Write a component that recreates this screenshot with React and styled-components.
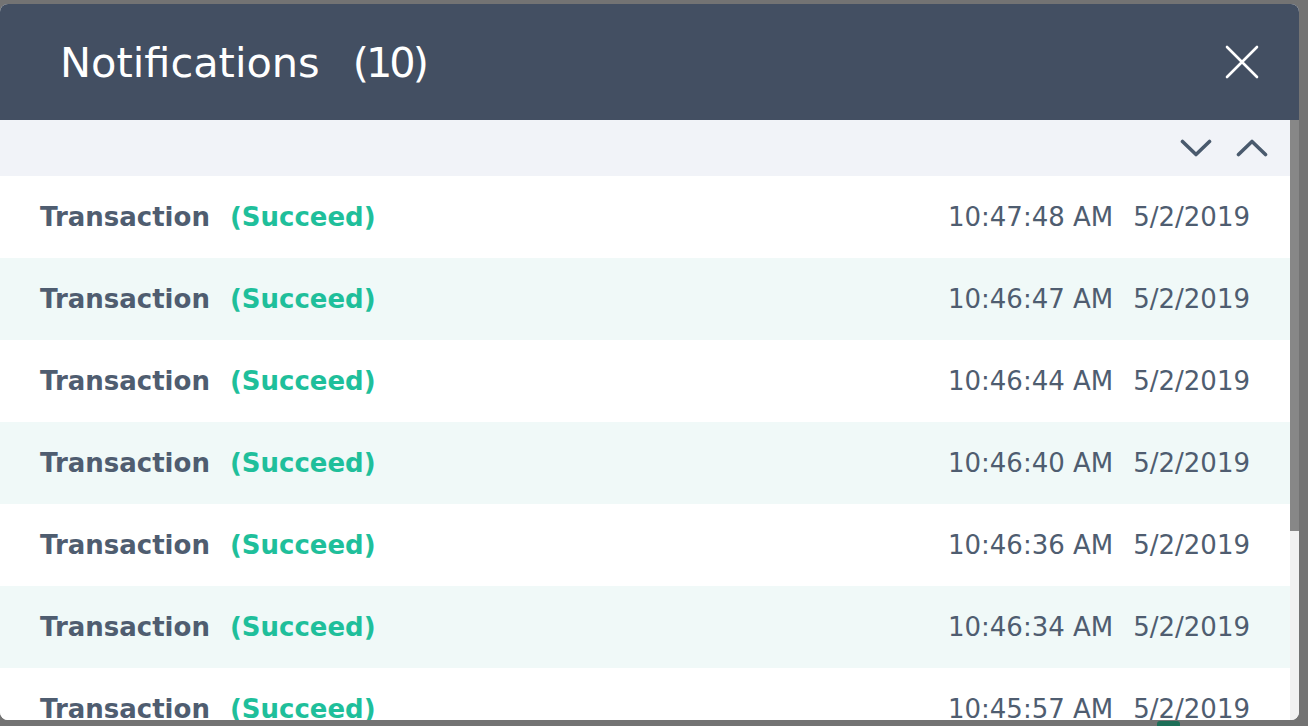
import React from "react";
import styled, { createGlobalStyle } from "styled-components";

const rows = [
  { time: "10:47:48 AM", date: "5/2/2019" },
  { time: "10:46:47 AM", date: "5/2/2019" },
  { time: "10:46:44 AM", date: "5/2/2019" },
  { time: "10:46:40 AM", date: "5/2/2019" },
  { time: "10:46:36 AM", date: "5/2/2019" },
  { time: "10:46:34 AM", date: "5/2/2019" },
  { time: "10:45:57 AM", date: "5/2/2019" },
  { time: "10:45:51 AM", date: "5/2/2019" },
  { time: "10:45:44 AM", date: "5/2/2019" },
  { time: "10:45:30 AM", date: "5/2/2019" },
];

const GlobalStyle = createGlobalStyle`
  html, body {
    margin: 0;
    padding: 0;
    background: #737373;
    overflow: hidden;
  }
  body {
    font-family: "DejaVu Sans", "Liberation Sans", sans-serif;
  }
`;

const Backdrop = styled.div`
  width: 1308px;
  height: 726px;
  padding: 4px 9px 0 0;
  box-sizing: border-box;
  display: flex;
  flex-direction: column;
`;

const Modal = styled.div`
  width: 1299px;
  height: 716px;
  flex-shrink: 0;
  border-radius: 8px;
  overflow: hidden;
  background: #fff;
  display: flex;
  flex-direction: column;
`;

const Header = styled.div`
  height: 116px;
  flex-shrink: 0;
  background: #434f62;
  display: flex;
  align-items: center;
  justify-content: space-between;
  padding: 0 40px 0 60px;
`;

const Title = styled.h1`
  margin: 0;
  color: #fff;
  font-size: 41.5px;
  font-weight: 400;
  display: flex;
  gap: 33px;
`;

const Count = styled.span`
  letter-spacing: -3px;
`;

const CloseButton = styled.button`
  border: none;
  background: none;
  padding: 0;
  width: 34px;
  height: 34px;
  display: flex;
  align-items: center;
  justify-content: center;
  cursor: pointer;
`;

const Body = styled.div`
  flex: 1;
  min-height: 0;
  display: flex;
`;

const List = styled.div`
  flex: 1;
  overflow: hidden;
`;

const ScrollTrack = styled.div`
  width: 9px;
  flex-shrink: 0;
  background: #f1f1f1;
  display: flex;
  flex-direction: column;
`;

const ScrollThumb = styled.div`
  width: 9px;
  background: #878787;
`;

const Toolbar = styled.div`
  height: 56px;
  background: #f1f3f8;
  display: flex;
  align-items: center;
  justify-content: flex-end;
  gap: 24px;
  padding-right: 22px;
`;

const ArrowButton = styled.button`
  border: none;
  background: none;
  padding: 0;
  width: 32px;
  height: 20px;
  display: flex;
  align-items: center;
  justify-content: center;
  cursor: pointer;
`;

const Row = styled.div`
  height: 82px;
  display: flex;
  align-items: center;
  padding: 0 40px;
  background: ${(p) => (p.$alt ? "#f0f9f8" : "#fff")};
  font-size: 26px;
  color: #4f5d70;
`;

const Kind = styled.span`
  font-weight: 700;
  color: #4f5d70;
`;

const Status = styled.span`
  font-weight: 700;
  color: #1fbf9b;
  margin-left: 20px;
`;

const Stamp = styled.span`
  margin-left: auto;
  display: flex;
  gap: 20px;
`;

const Footer = styled.div`
  flex: 1;
  display: flex;
  padding-left: 1157px;
  padding-top: 1px;
`;

const Peek = styled.div`
  width: 23px;
  height: 6px;
  background: #1d6e57;
  border-radius: 3px 3px 0 0;
`;

const CloseIcon = () => (
  <svg width="34" height="34" viewBox="0 0 34 34">
    <path d="M2 2 L32 32 M32 2 L2 32" stroke="#fff" strokeWidth="2.6" strokeLinecap="round" />
  </svg>
);

const Chevron = ({ up }) => (
  <svg width="32" height="18" viewBox="0 0 32 18">
    <path
      d={up ? "M2.5 15.5 L16 2.5 L29.5 15.5" : "M2.5 2.5 L16 15.5 L29.5 2.5"}
      fill="none"
      stroke="#4a5a6e"
      strokeWidth="3.6"
      strokeLinecap="round"
      strokeLinejoin="round"
    />
  </svg>
);

export default function App() {
  const visible = 600;
  const content = 56 + rows.length * 82;
  const thumb = Math.round((visible * visible) / content);

  return (
    <>
      <GlobalStyle />
      <Backdrop>
        <Modal>
          <Header>
            <Title>
              <span>Notifications</span>
              <Count>(10)</Count>
            </Title>
            <CloseButton aria-label="Close">
              <CloseIcon />
            </CloseButton>
          </Header>
          <Body>
            <List>
              <Toolbar>
                <ArrowButton aria-label="Expand all">
                  <Chevron />
                </ArrowButton>
                <ArrowButton aria-label="Collapse all">
                  <Chevron up />
                </ArrowButton>
              </Toolbar>
              {rows.map((r, i) => (
                <Row key={i} $alt={i % 2 === 1}>
                  <Kind>Transaction</Kind>
                  <Status>(Succeed)</Status>
                  <Stamp>
                    <span>{r.time}</span>
                    <span>{r.date}</span>
                  </Stamp>
                </Row>
              ))}
            </List>
            <ScrollTrack>
              <ScrollThumb style={{ height: thumb }} />
            </ScrollTrack>
          </Body>
        </Modal>
        <Footer>
          <Peek />
        </Footer>
      </Backdrop>
    </>
  );
}
